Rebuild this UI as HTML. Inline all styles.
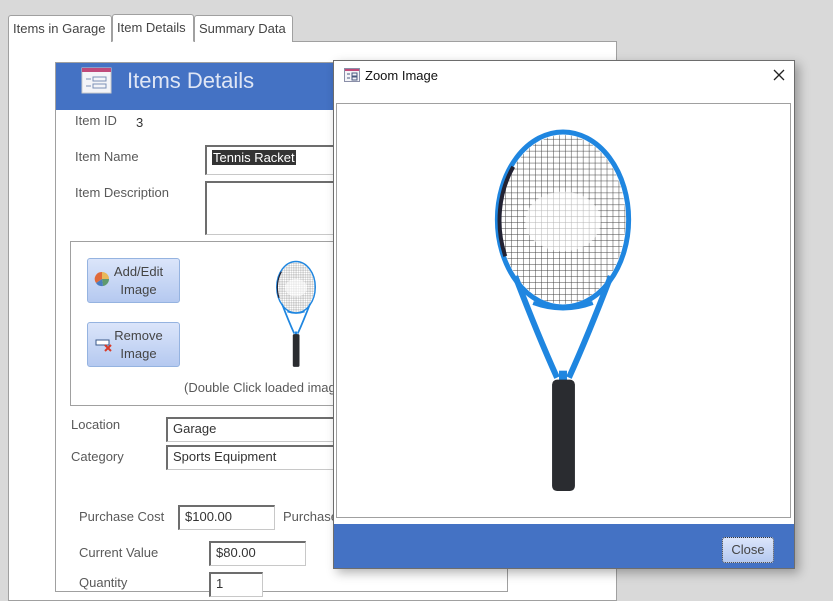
<!DOCTYPE html>
<html><head><style>
*{margin:0;padding:0;box-sizing:border-box}
body{width:833px;height:582px;background:#d9d9d9;position:relative;overflow:hidden;font-family:"Liberation Sans",sans-serif;font-size:13px;color:#595959}
.a{position:absolute}
.tab{position:absolute;top:15px;height:27px;border:1px solid #a0a0a0;border-bottom:none;border-radius:3px 3px 0 0;background:#fff;color:#444;padding:5px 4px 0;font-size:13px}
.lbl{position:absolute;color:#595959;font-size:13px}
.box{position:absolute;background:#fff;border:1px solid #c8c8c8;border-top:2px solid #6d6d6d;border-left:2px solid #6d6d6d;color:#333;padding:2px 5px;font-size:13px}
.btn{position:absolute;border:1px solid #95b3e0;border-radius:3px;background:linear-gradient(#dbe5fa,#b5c9f0);color:#444;text-align:center;font-size:13px;line-height:18px}
</style></head><body>
<svg width="0" height="0" style="position:absolute"><defs>
<pattern id="s" width="6" height="6" patternUnits="userSpaceOnUse"><path d="M0 0H6M0 0V6" stroke="#444" stroke-width="1"/></pattern>
<clipPath id="c"><ellipse cx="70" cy="93" rx="63" ry="85"/></clipPath>
<symbol id="r" viewBox="0 0 140 370">
<rect x="0" y="0" width="140" height="190" fill="url(#s)" clip-path="url(#c)"/>
<ellipse cx="70" cy="95" rx="38" ry="30" fill="#fff" opacity=".6"/>
<path d="M22 150 Q45 210 64 252" fill="none" stroke="#1f86e0" stroke-width="6"/>
<path d="M118 150 Q95 210 76 252" fill="none" stroke="#1f86e0" stroke-width="6"/>
<path d="M66 245 L74 245 L74 256 L66 256z" fill="#1f86e0"/>
<ellipse cx="70" cy="93" rx="66" ry="88" fill="none" stroke="#1f86e0" stroke-width="5"/>
<path d="M20 40 A66 88 0 0 0 12 130" fill="none" stroke="#223" stroke-width="4"/>
<path d="M40 177 Q70 188 100 177" fill="none" stroke="#1f86e0" stroke-width="4"/>
<rect x="59" y="254" width="23" height="112" rx="5" fill="#2a2c30"/>
</symbol></defs></svg>

<div class="a" style="left:8px;top:41px;width:609px;height:560px;background:#fff;border:1px solid #a0a0a0"></div>
<div class="tab" style="left:8px;width:104px">Items in Garage</div>
<div class="tab" style="left:112px;width:82px;top:14px;height:28px;border-bottom:1px solid #fff">Item Details</div>
<div class="tab" style="left:194px;width:99px">Summary Data</div>

<div class="a" style="left:55px;top:62px;width:453px;height:530px;background:#fff;border:1px solid #a0a0a0"></div>
<div class="a" style="left:56px;top:63px;width:300px;height:47px;background:#4472c4"></div>
<svg class="a" style="left:81px;top:67px" width="32" height="27"><rect x="1" y="1" width="29" height="25" fill="#f4f4f8" stroke="#ccc"/><rect x="1" y="1" width="29" height="4" fill="#c04a7a"/><path d="M5 12h5M5 19h5M12 10h13v4H12zM12 17h13v4H12z" stroke="#7b8fb6" fill="none"/></svg>
<div class="a" style="left:127px;top:68px;color:#dfe6f5;font-size:22px">Items Details</div>
<div class="lbl" style="left:75px;top:113px">Item ID</div>
<div class="lbl" style="left:136px;top:115px;color:#333">3</div>
<div class="lbl" style="left:75px;top:149px">Item Name</div>
<div class="box" style="left:205px;top:145px;width:140px;height:30px;padding-top:3px"><span style="background:#333;color:#fff;padding:0 1px">Tennis Racket</span></div>
<div class="lbl" style="left:75px;top:185px">Item Description</div>
<div class="box" style="left:205px;top:181px;width:140px;height:54px"></div>
<div class="a" style="left:70px;top:241px;width:280px;height:165px;border:1px solid #a0a0a0;border-right:none"></div>
<div class="btn" style="left:87px;top:258px;width:93px;height:45px;padding-top:4px;padding-left:10px">Add/Edit<br>Image</div>
<svg class="a" style="left:94px;top:271px" width="17" height="17"><path d="M8 8L8 1A7 7 0 0 1 15 8z" fill="#e8b85a"/><path d="M8 8L15 8A7 7 0 0 1 9 15z" fill="#5f9a6e"/><path d="M8 8L9 15A7 7 0 0 1 2 12z" fill="#4a7cc0"/><path d="M8 8L2 12A7 7 0 0 1 8 1z" fill="#e06a3a"/></svg>
<div class="btn" style="left:87px;top:322px;width:93px;height:45px;padding-top:4px;padding-left:10px">Remove<br>Image</div>
<svg class="a" style="left:95px;top:338px" width="18" height="14"><rect x="1" y="2" width="13" height="5" fill="#fff" stroke="#3b5a8a"/><path d="M10 7l6 6M16 7l-6 6" stroke="#d83b2a" stroke-width="2"/></svg>
<svg class="a" style="left:274px;top:260px" width="44" height="108"><use href="#r"/></svg>
<div class="lbl" style="left:184px;top:380px">(Double Click loaded image</div>
<div class="lbl" style="left:71px;top:417px">Location</div>
<div class="box" style="left:166px;top:417px;width:180px;height:25px">Garage</div>
<div class="lbl" style="left:71px;top:449px">Category</div>
<div class="box" style="left:166px;top:445px;width:180px;height:25px">Sports Equipment</div>
<div class="lbl" style="left:79px;top:509px">Purchase Cost</div>
<div class="box" style="left:178px;top:505px;width:97px;height:25px">$100.00</div>
<div class="lbl" style="left:283px;top:509px">Purchase</div>
<div class="lbl" style="left:79px;top:545px">Current Value</div>
<div class="box" style="left:209px;top:541px;width:97px;height:25px">$80.00</div>
<div class="lbl" style="left:79px;top:575px">Quantity</div>
<div class="box" style="left:209px;top:572px;width:54px;height:25px">1</div>

<div class="a" style="left:333px;top:60px;width:462px;height:509px;background:#fff;border:1px solid #6d6d6d;box-shadow:4px 4px 10px rgba(0,0,0,.3)"></div>
<svg class="a" style="left:344px;top:68px" width="16" height="14"><rect x=".5" y=".5" width="15" height="13" fill="#f4f4f8" stroke="#8a8fa8"/><rect x="1" y="1" width="14" height="2" fill="#c04a7a"/><path d="M3 6h3M3 10h3M8 5h5v3H8zM8 9h5v3H8z" stroke="#4a5a80" fill="none"/></svg>
<div class="a" style="left:365px;top:68px;color:#111;font-size:13px">Zoom Image</div>
<svg class="a" style="left:773px;top:69px" width="12" height="12"><path d="M1 1L11 11M11 1L1 11" stroke="#222" stroke-width="1.3"/></svg>
<div class="a" style="left:336px;top:103px;width:455px;height:415px;border:1px solid #a0a0a0"></div>
<svg class="a" style="left:492px;top:127px" width="142" height="368"><use href="#r"/></svg>
<div class="a" style="left:334px;top:524px;width:460px;height:44px;background:#4472c4"></div>
<div class="btn" style="left:722px;top:537px;width:52px;height:26px;line-height:24px;border:1px dotted #333;color:#444">Close</div>
</body></html>
